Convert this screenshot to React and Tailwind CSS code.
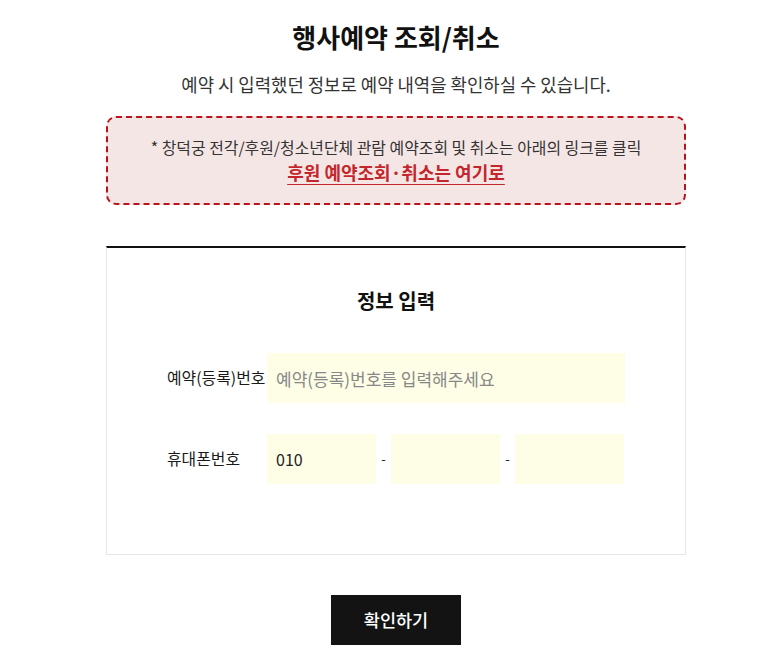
import { useState } from "react";

const font = { fontFamily: '"Noto Sans CJK KR", "Noto Sans", sans-serif' };

function App() {
  const [resNo, setResNo] = useState("");
  const [phone1, setPhone1] = useState("010");
  const [phone2, setPhone2] = useState("");
  const [phone3, setPhone3] = useState("");

  return (
    <div className="min-h-screen bg-white text-[#111]" style={font}>
      <div className="ml-[106px] flex w-[580px] flex-col pt-[17px]">
        <h2 className="text-center text-[26px] font-bold leading-[40px] text-[#111]">
          행사예약 조회/취소
        </h2>
        <p className="mt-[14px] text-center text-[17.8px] leading-[26px] text-[#333]">
          예약 시 입력했던 정보로 예약 내역을 확인하실 수 있습니다.
        </p>

        {/* notice */}
        <div className="mt-[19px] flex h-[89px] flex-col items-center justify-center rounded-[10px] border-2 border-dashed border-[#b8141c] bg-[#f5e6e6]">
          <p className="text-[15.9px] leading-[22px] text-[#333]">
            * 창덕궁 전각/후원/청소년단체 관람 예약조회 및 취소는 아래의 링크를 클릭
          </p>
          <a
            href="#"
            className="mt-[1px] text-[18px] font-bold leading-[24px] text-[#c3262c] underline decoration-1 underline-offset-[4px]"
          >
            후원 예약조회·취소는 여기로
          </a>
        </div>

        {/* form */}
        <div className="mt-[41px] h-[309px] border-x border-b border-t-2 border-x-[#e6e6e6] border-b-[#e6e6e6] border-t-[#111] pt-[38px]">
          <h3 className="text-center text-[20px] font-bold leading-[30px] text-[#111]">
            정보 입력
          </h3>
          <div className="mt-[37px] flex flex-col gap-[31px] pl-[60px]">
            <div className="flex items-center">
              <label className="w-[100px] whitespace-nowrap text-[15.9px] text-[#1a1a1a]">
                예약(등록)번호
              </label>
              <input
                type="text"
                value={resNo}
                onChange={(e) => setResNo(e.target.value)}
                placeholder="예약(등록)번호를 입력해주세요"
                className="h-[50px] w-[358px] bg-[#fefde6] px-[9px] text-[17px] text-[#222] placeholder:text-[#888] focus:outline-none"
              />
            </div>
            <div className="flex items-center">
              <label className="w-[100px] text-[15.9px] text-[#1a1a1a]">휴대폰번호</label>
              <input
                type="text"
                value={phone1}
                onChange={(e) => setPhone1(e.target.value)}
                className="h-[50px] w-[109px] bg-[#fefde6] px-[9px] text-[16px] text-[#222] focus:outline-none"
              />
              <span className="w-[15px] text-center text-[13px] text-[#222]">-</span>
              <input
                type="text"
                value={phone2}
                onChange={(e) => setPhone2(e.target.value)}
                className="h-[50px] w-[109px] bg-[#fefde6] px-[9px] text-[16px] text-[#222] focus:outline-none"
              />
              <span className="w-[15px] text-center text-[13px] text-[#222]">-</span>
              <input
                type="text"
                value={phone3}
                onChange={(e) => setPhone3(e.target.value)}
                className="h-[50px] w-[109px] bg-[#fefde6] px-[9px] text-[16px] text-[#222] focus:outline-none"
              />
            </div>
          </div>
        </div>

        <div className="mt-[40px] flex justify-center">
          <button
            type="button"
            className="h-[50px] w-[130px] bg-[#131313] text-[17.5px] font-medium text-white"
          >
            확인하기
          </button>
        </div>
      </div>
    </div>
  );
}

export default App;
